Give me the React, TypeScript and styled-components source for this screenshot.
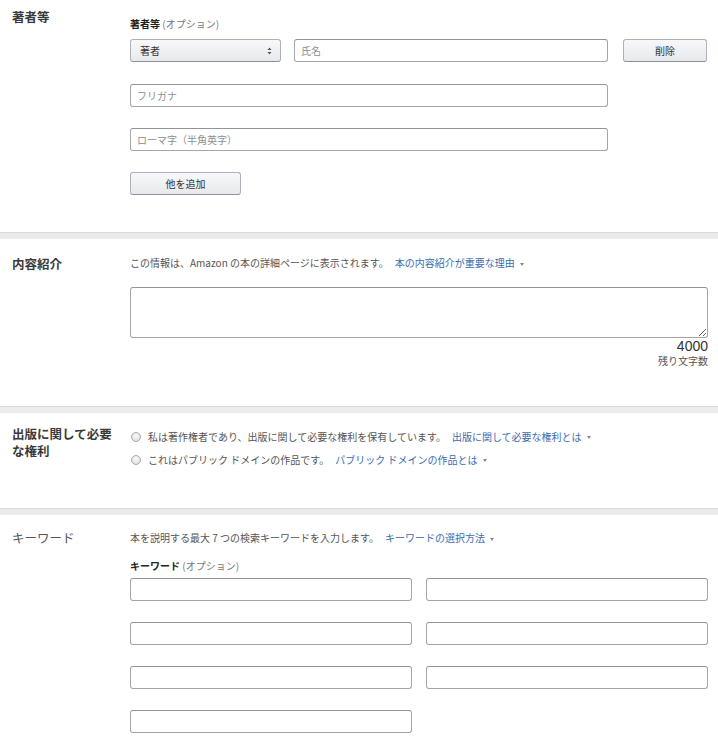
import React from "react";
import styled, { createGlobalStyle } from "styled-components";

const GlobalStyle = createGlobalStyle`
  html, body {
    margin: 0;
    padding: 0;
    background: #ffffff;
  }
  body {
    font-family: "Noto Sans CJK JP", "Noto Sans", sans-serif;
    color: #333;
  }
`;

const Page = styled.div`
  width: 718px;
`;

const Section = styled.section<{ $top: number; $bottom: number }>`
  display: grid;
  grid-template-columns: 130px 1fr;
  padding: ${(p) => p.$top}px 10px ${(p) => p.$bottom}px 0;
`;

const Band = styled.div`
  height: 6px;
  background: #ebebeb;
  border-top: 1px solid #dadada;
`;

const Title = styled.h2<{ $shift?: number; $light?: boolean }>`
  margin: ${(p) => p.$shift || 0}px 0 0 0;
  padding-left: 12px;
  width: 106px;
  font-size: 12.5px;
  line-height: 17px;
  font-weight: ${(p) => (p.$light ? 400 : 700)};
  color: ${(p) => (p.$light ? "#555" : "#3a3a3a")};
`;

const Content = styled.div`
  display: flex;
  flex-direction: column;
  min-width: 0;
`;

const Caption = styled.div<{ $gap?: number }>`
  font-size: 10px;
  line-height: 14px;
  color: #555;
  margin-bottom: ${(p) => p.$gap || 0}px;
  white-space: nowrap;
`;

const Strong = styled.b`
  color: #222;
  font-weight: 700;
`;

const Muted = styled.span`
  color: #777;
`;

const Link = styled.a`
  color: #3b6cb0;
  text-decoration: none;
  margin-left: 6px;
  cursor: pointer;
`;

const Caret = styled.span`
  display: inline-block;
  margin-left: 5px;
  vertical-align: middle;
  border-left: 2.5px solid transparent;
  border-right: 2.5px solid transparent;
  border-top: 3px solid #888;
`;

const Stack = styled.div`
  display: flex;
  flex-direction: column;
  gap: 21px;
  align-items: flex-start;
`;

const Row = styled.div`
  display: flex;
  align-items: center;
  margin-bottom: 1px;
`;

const Input = styled.input<{ $w?: number }>`
  box-sizing: border-box;
  width: ${(p) => (p.$w ? `${p.$w}px` : "100%")};
  height: 23px;
  padding: 0 6px;
  border: 1px solid #a6a6a6;
  border-top-color: #949494;
  border-radius: 3px;
  background: #fff;
  font-family: inherit;
  font-size: 10px;
  color: #333;
  outline: none;
  &::placeholder {
    color: #8e8e8e;
  }
`;

const Button = styled.button<{ $w: number; $left?: number }>`
  box-sizing: border-box;
  width: ${(p) => p.$w}px;
  height: 23px;
  margin-left: ${(p) => p.$left || 0}px;
  border: 1px solid #adb1b8;
  border-bottom-color: #8d9096;
  border-radius: 3px;
  background: linear-gradient(to bottom, #f7f8fa, #e7e9ec);
  font-family: inherit;
  font-size: 10px;
  color: #333;
  padding: 0;
`;

const SelectBox = styled.div`
  box-sizing: border-box;
  width: 151px;
  height: 23px;
  padding: 0 8px 0 9px;
  margin-right: 13px;
  display: flex;
  align-items: center;
  justify-content: space-between;
  border: 1px solid #adb1b8;
  border-bottom-color: #8d9096;
  border-radius: 3px;
  background: linear-gradient(to bottom, #f7f8fa, #e7e9ec);
  font-size: 10px;
  color: #333;
`;

const TextArea = styled.textarea`
  box-sizing: border-box;
  width: 100%;
  height: 51px;
  border: 1px solid #a6a6a6;
  border-top-color: #949494;
  border-radius: 3px;
  font-family: inherit;
  font-size: 11px;
  margin: 0;
  display: block;
  outline: none;
`;

const Counter = styled.div`
  text-align: right;
  font-size: 14px;
  line-height: 16px;
  color: #333;
  font-family: "Liberation Sans", "Noto Sans CJK JP", sans-serif;
`;

const CounterNote = styled.div`
  text-align: right;
  font-size: 10px;
  line-height: 13px;
  color: #555;
`;

const RadioList = styled.div`
  display: flex;
  flex-direction: column;
  gap: 9px;
  margin-top: 5px;
`;

const RadioRow = styled.label`
  display: flex;
  align-items: center;
  font-size: 10px;
  line-height: 14px;
  color: #555;
  white-space: nowrap;
`;

const RadioDot = styled.span`
  box-sizing: border-box;
  width: 10px;
  height: 10px;
  margin: 0 7px 0 1px;
  border-radius: 50%;
  border: 1px solid #aaa;
  background: radial-gradient(circle at 50% 35%, #fafafa, #d8d8d8);
`;

const KeywordGrid = styled.div`
  display: grid;
  grid-template-columns: 282px 282px;
  column-gap: 14px;
  row-gap: 21px;
`;

function Arrows() {
  return (
    <svg width="5" height="8" viewBox="0 0 5 8">
      <path d="M2.5 0.5 L4.5 3 L0.5 3 Z" fill="#555" />
      <path d="M2.5 7.5 L4.5 5 L0.5 5 Z" fill="#555" />
    </svg>
  );
}

export default function App() {
  const keywords = [0, 1, 2, 3, 4, 5, 6];
  return (
    <Page>
      <GlobalStyle />
      <Section $top={17} $bottom={37}>
        <Title $shift={-9}>著者等</Title>
        <Content>
          <Caption $gap={8}>
            <Strong>著者等</Strong> <Muted>(オプション)</Muted>
          </Caption>
          <Stack>
            <Row>
              <SelectBox>
                <span>著者</span>
                <Arrows />
              </SelectBox>
              <Input $w={314} placeholder="氏名" />
              <Button $w={84} $left={15}>
                削除
              </Button>
            </Row>
            <Input $w={478} placeholder="フリガナ" />
            <Input $w={478} placeholder="ローマ字（半角英字）" />
            <Button $w={111}>他を追加</Button>
          </Stack>
        </Content>
      </Section>
      <Band />
      <Section $top={17} $bottom={39}>
        <Title $shift={-1}>内容紹介</Title>
        <Content>
          <Caption $gap={17}>
            この情報は、Amazon の本の詳細ページに表示されます。
            <Link>本の内容紹介が重要な理由</Link>
            <Caret />
          </Caption>
          <TextArea />
          <Counter>4000</Counter>
          <CounterNote>残り文字数</CounterNote>
        </Content>
      </Section>
      <Band />
      <Section $top={12} $bottom={41}>
        <Title>出版に関して必要な権利</Title>
        <Content>
          <RadioList>
            <RadioRow>
              <RadioDot />
              私は著作権者であり、出版に関して必要な権利を保有しています。
              <Link>出版に関して必要な権利とは</Link>
              <Caret />
            </RadioRow>
            <RadioRow>
              <RadioDot />
              これはパブリック ドメインの作品です。
              <Link>パブリック ドメインの作品とは</Link>
              <Caret />
            </RadioRow>
          </RadioList>
        </Content>
      </Section>
      <Band />
      <Section $top={16} $bottom={20}>
        <Title $light $shift={-2}>
          キーワード
        </Title>
        <Content>
          <Caption $gap={14}>
            本を説明する最大 7 つの検索キーワードを入力します。
            <Link>キーワードの選択方法</Link>
            <Caret />
          </Caption>
          <Caption $gap={5}>
            <Strong>キーワード</Strong> <Muted>(オプション)</Muted>
          </Caption>
          <KeywordGrid>
            {keywords.map((k) => (
              <Input key={k} />
            ))}
          </KeywordGrid>
        </Content>
      </Section>
    </Page>
  );
}
